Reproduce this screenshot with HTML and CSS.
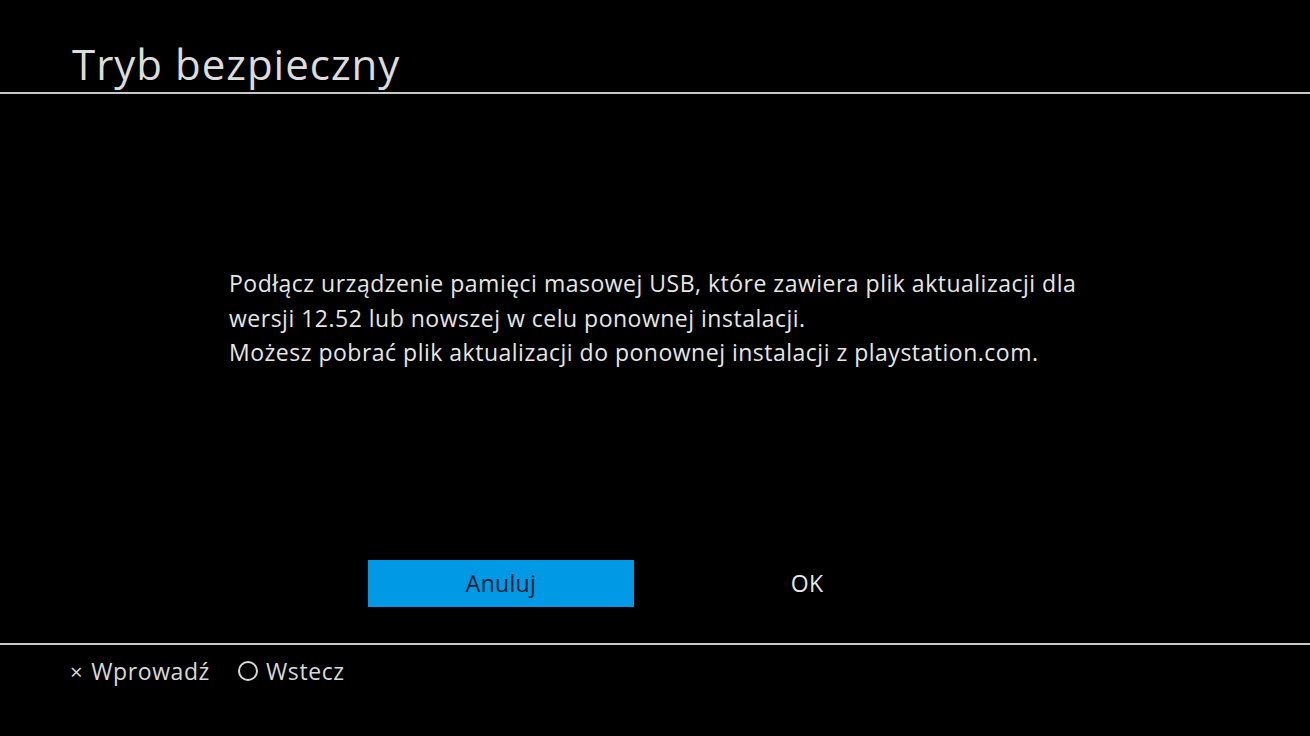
FILE: index.html
```html
<!DOCTYPE html>
<html lang="pl">
<head>
<meta charset="utf-8">
<title>Tryb bezpieczny</title>
<link rel="stylesheet" href="styles.css">
</head>
<body>
<div class="screen">
  <header class="header">
    <h1 class="title">Tryb bezpieczny</h1>
  </header>
  <main class="content">
    <p class="message">Podłącz urządzenie pamięci masowej USB, które zawiera plik aktualizacji dla<br>wersji 12.52 lub nowszej w celu ponownej instalacji.<br>Możesz pobrać plik aktualizacji do ponownej instalacji z playstation.com.</p>
    <div class="buttons">
      <div class="btn btn-active">Anuluj</div>
      <div class="btn">OK</div>
    </div>
  </main>
  <footer class="footer">
    <span class="hint"><span class="cross">×</span>Wprowadź</span>
    <span class="hint"><span class="circle"></span>Wstecz</span>
  </footer>
</div>
</body>
</html>
```
FILE: styles.css
```css
html, body {
  margin: 0;
  padding: 0;
  background: #000;
}
.screen {
  width: 1310px;
  height: 736px;
  background: #000;
  color: #e6e6e6;
  font-family: "Open Sans", "Noto Sans", sans-serif;
  display: flex;
  flex-direction: column;
}
.header {
  height: 92px;
  border-bottom: 2px solid #c8c8c8;
  display: flex;
  align-items: flex-end;
}
.title {
  margin: 0 0 0 72px;
  font-weight: 400;
  font-size: 42px;
  line-height: 56px;
  letter-spacing: 1px;
  color: #dcdcdc;
}
.content {
  height: 549px;
  border-bottom: 2px solid #c8c8c8;
  display: flex;
  flex-direction: column;
}
.message {
  margin: 172px 0 0 229px;
  font-size: 23px;
  line-height: 34.5px;
  letter-spacing: 0.5px;
  color: #e6e6e6;
}
.buttons {
  margin: 190px 0 0 368px;
  display: flex;
  gap: 40px;
}
.btn {
  width: 266px;
  height: 47px;
  display: flex;
  align-items: center;
  justify-content: center;
  font-size: 23px;
  letter-spacing: 0.3px;
  color: #e6e6e6;
}
.btn-active {
  background: #0099e5;
  color: #0a1f33;
}
.footer {
  flex: 1;
  display: flex;
  align-items: flex-start;
  padding: 10px 0 0 70px;
  gap: 28px;
  font-size: 23px;
  letter-spacing: 0.6px;
  color: #d8d8d8;
}
.hint {
  display: flex;
  align-items: center;
}
.cross {
  font-size: 22px;
  margin-right: 8px;
}
.circle {
  width: 16px;
  height: 16px;
  border: 2px solid #d8d8d8;
  border-radius: 50%;
  margin-right: 8px;
}
```
